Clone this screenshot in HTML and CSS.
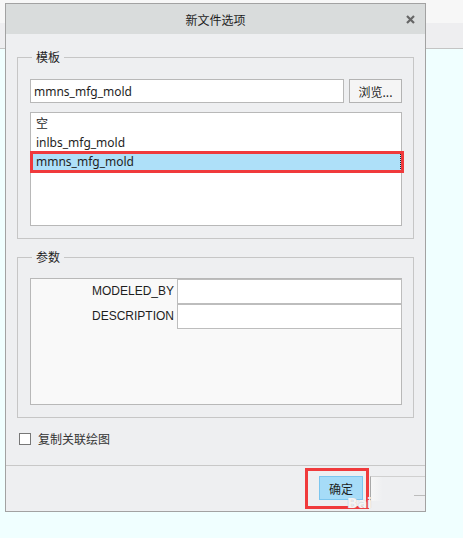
FILE: index.html
```html
<!DOCTYPE html>
<html lang="zh-CN">
<head>
  <meta charset="UTF-8" />
  <title>新文件选项</title>
  <link rel="stylesheet" href="styles.css">
</head>
<body>
  <div class="dialog">
    <div class="titlebar">
      <span></span>
      <span class="title">新文件选项</span>
      <svg class="close" width="9" height="9" viewBox="0 0 9 9">
        <path d="M1 1 L8 8 M8 1 L1 8" stroke="#666" stroke-width="2.2" />
      </svg>
    </div>

    <div class="content">
      <fieldset class="group">
        <legend>模板</legend>
        <div class="template-row">
          <input class="text-field" type="text" value="mmns_mfg_mold" />
          <button class="browse">浏览...</button>
        </div>
        <ul class="listbox">
          <li>空</li>
          <li>inlbs_mfg_mold</li>
          <li class="selected">mmns_mfg_mold</li>
        </ul>
      </fieldset>

      <fieldset class="group params">
        <legend>参数</legend>
        <div class="param-table">
          <div class="param-name">MODELED_BY</div>
          <div class="param-value"></div>
          <div class="param-name">DESCRIPTION</div>
          <div class="param-value"></div>
        </div>
      </fieldset>

      <label class="check-row">
        <span class="checkbox"></span>
        复制关联绘图
      </label>
    </div>

    <div class="footer">
      <button class="ok">确定</button>
      <span class="stub"></span>
    </div>
    <span class="watermark">Bai</span>
  </div>
</body>
</html>
```

FILE: styles.css
```css
html {
  background: linear-gradient(to bottom, #f7f7f7 0 23px, #eeeef0 23px 48px, #c4c4c4 48px 49px, #f0ffff 49px);
  min-height: 100%;
}
body {
  margin: 0;
  padding: 3px 0 0 5px;
  font-family: "Noto Sans", "Noto Sans CJK SC", sans-serif;
  font-size: 12px;
  color: #222;
}
.dialog {
  position: relative;
  width: 419px;
  border: 1px solid #a2a2a2;
  background: #eeeff1;
}
.titlebar {
  height: 30px;
  background: #d9dcdc;
  display: grid;
  grid-template-columns: 1fr auto 1fr;
  align-items: center;
  padding-right: 10px;
  padding-left: 10px;
}
.title {
  font-family: "Noto Sans CJK SC", sans-serif;
  font-size: 12px;
  color: #1e1e1e;
  line-height: 16px;
  padding-top: 1px;
}
.close {
  justify-self: end;
  margin-top: 1px;
}
.content {
  height: 431px;
  padding: 15px 11px 0 11px;
  box-sizing: border-box;
}
.group {
  margin: 0;
  padding: 14px 11px 12px 12px;
  border: 1px solid #c6c6c6;
  min-width: 0;
}
.group legend {
  font-family: "Noto Sans CJK SC", sans-serif;
  font-size: 12px;
  line-height: 16px;
  padding: 0 4px;
  margin-left: 2px;
  color: #1e1e1e;
}
.params {
  margin-top: 10px;
  padding-top: 13px;
}
.template-row {
  display: flex;
  gap: 5px;
  height: 24px;
}
.text-field {
  flex: 1;
  margin: 0;
  height: 24px;
  box-sizing: border-box;
  border: 1px solid #b8b8b8;
  background: #fff;
  padding: 0 3px;
  font-family: "Noto Sans", sans-serif;
  font-size: 12px;
  color: #1e1e1e;
  outline: none;
}
.browse {
  width: 53px;
  height: 24px;
  margin: 0;
  padding: 0;
  border: 1px solid #b3b3b3;
  background: #f5f5f5;
  font-family: "Noto Sans CJK SC", sans-serif;
  font-size: 12px;
  color: #1e1e1e;
}
.listbox {
  list-style: none;
  margin: 9px 0 0;
  padding: 1px 0 0;
  height: 114px;
  box-sizing: border-box;
  border: 1px solid #b8b8b8;
  background: #fff;
}
.listbox li {
  height: 19px;
  line-height: 19px;
  padding-left: 5px;
  color: #1e1e1e;
}
.listbox .selected {
  position: relative;
  background: #aee0f9;
  outline: 1px dotted #222;
  outline-offset: -1px;
}
.listbox .selected::after {
  content: "";
  position: absolute;
  top: -1px;
  right: -3px;
  bottom: -2px;
  left: -1px;
  border: 3px solid #f03a3c;
}
.param-table {
  height: 127px;
  box-sizing: border-box;
  border: 1px solid #b8b8b8;
  background: #f9f9f9;
  display: grid;
  grid-template-columns: 146px 1fr;
  grid-template-rows: 25px 25px;
  align-content: start;
}
.param-name {
  text-align: right;
  padding-right: 3px;
  line-height: 25px;
  font-family: "Liberation Sans", sans-serif;
  font-size: 12px;
  color: #1e1e1e;
}
.param-value {
  border: 1px solid #bdbdbd;
  background: #fff;
  margin-right: -1px;
}
.param-value + .param-name + .param-value {
  margin-top: 0;
}
.check-row {
  display: flex;
  align-items: center;
  gap: 7px;
  padding: 14px 0 0 2px;
  font-family: "Noto Sans CJK SC", sans-serif;
  font-size: 12px;
  line-height: 14px;
  color: #333;
}
.checkbox {
  width: 10px;
  height: 10px;
  border: 1px solid #777;
  background: #fff;
}
.footer {
  height: 46px;
  box-sizing: border-box;
  border-top: 1px solid #c8c8c8;
  padding-top: 10px;
  display: flex;
  justify-content: flex-end;
  gap: 7px;
  overflow: hidden;
}
.ok {
  position: relative;
  width: 44px;
  height: 24px;
  margin: 0;
  padding: 0;
  border: 1px solid #7cc6ef;
  background: #a6dcf8;
  font-family: "Noto Sans CJK SC", sans-serif;
  font-size: 12px;
  color: #1e1e1e;
}
.ok::after {
  content: "";
  position: absolute;
  top: -9px;
  right: -7px;
  bottom: -10px;
  left: -15px;
  border: 3px solid #f03a3c;
}
.stub {
  width: 54px;
  height: 24px;
  border-left: 1px solid #a8a8a8;
  border-top: 1px solid #d0d0d0;
  background: linear-gradient(to right, #f6f6f6, #eeeff1 12px);
  position: relative;
}
.stub::after {
  content: "";
  position: absolute;
  right: 0;
  top: 18px;
  width: 11px;
  border-top: 1px solid #bcbcbc;
}
.watermark {
  position: absolute;
  left: 341px;
  bottom: 0;
  font-family: "DejaVu Sans", sans-serif;
  font-weight: bold;
  font-size: 14px;
  line-height: 15px;
  color: rgba(255, 255, 255, 0.85);
  text-shadow: 0 0 1px #b8b8b8;
}
```
